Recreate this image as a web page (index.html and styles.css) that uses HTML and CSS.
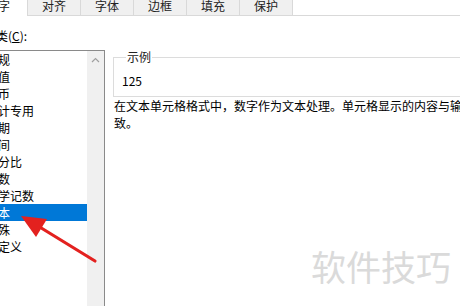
FILE: index.html
```html
<!DOCTYPE html>
<html lang="zh-CN">
<head>
    <meta charset="UTF-8">
    <title>设置单元格格式</title>
    <link rel="stylesheet" href="styles.css">
</head>
<body>
    <div class="dialog">
        <div class="tabs">
            <div class="tab active">数字</div>
            <div class="tab">对齐</div>
            <div class="tab">字体</div>
            <div class="tab">边框</div>
            <div class="tab">填充</div>
            <div class="tab">保护</div>
            <div class="tab-rest"></div>
        </div>

        <div class="label">分类(<u>C</u>):</div>

        <div class="main">
            <div class="listbox">
                <ul class="items">
                    <li>常规</li>
                    <li>数值</li>
                    <li>货币</li>
                    <li>会计专用</li>
                    <li>日期</li>
                    <li>时间</li>
                    <li>百分比</li>
                    <li>分数</li>
                    <li>科学记数</li>
                    <li class="selected">文本</li>
                    <li>特殊</li>
                    <li>自定义</li>
                </ul>
                <div class="scrollbar">
                    <svg class="scroll-up" width="9" height="6" viewBox="0 0 9 6">
                        <path d="M1 5 L4.5 1.5 L8 5" fill="none" stroke="#a0a0a0" stroke-width="1.2"/>
                    </svg>
                </div>
            </div>

            <div class="panel">
                <fieldset class="sample">
                    <legend>示例</legend>
                    <div class="sample-value">125</div>
                </fieldset>
                <p class="desc">在文本单元格格式中，数字作为文本处理。单元格显示的内容与输入的内容完全一致。</p>
            </div>
        </div>
    </div>

    <svg class="arrow" width="460" height="306" viewBox="0 0 460 306">
        <line x1="95" y1="261" x2="38" y2="226" stroke="#e3211f" stroke-width="3.2" stroke-linecap="round"/>
        <polygon points="21,216 47,219 36,237" fill="#e3211f"/>
    </svg>

    <div class="watermark">软件技巧</div>
</body>
</html>
```

FILE: styles.css
```css
html, body
{
    margin: 0;
    width: 460px;
    height: 306px;
    overflow: hidden;
    background: #ffffff;
}
body
{
    position: relative;
    font-family: "Noto Sans CJK SC", "Noto Sans", sans-serif;
    font-size: 12px;
    color: #000000;
}
.dialog
{
    width: 640px;
}

/* tab strip, cut off at the top */
.tabs
{
    display: flex;
    margin-top: -6px;
    margin-left: -25px;
    height: 22px;
}
.tab
{
    box-sizing: border-box;
    width: 53px;
    height: 22px;
    line-height: 22px;
    text-align: center;
    background: #f0f0f0;
    border: 1px solid #d9d9d9;
    border-left: none;
    color: #222;
}
.tab.active
{
    background: #ffffff;
    border-bottom: none;
    padding-right: 6px;
}
.tab-rest
{
    flex: 1;
    border-bottom: 1px solid #d9d9d9;
}

.label
{
    margin: 12px 0 0 -16px;
    line-height: 16px;
}
.label u
{
    text-decoration-thickness: 1px;
}

.main
{
    display: flex;
    margin-top: 6px;
}

/* category list */
.listbox
{
    display: flex;
    margin-left: -20px;
    width: 123px;
    height: 280px;
    border: 1px solid #8a8a8a;
    border-bottom: none;
}
.items
{
    flex: 1;
    list-style: none;
    margin: 0;
    padding: 0;
}
.items li
{
    height: 17px;
    line-height: 17px;
    padding-left: 5px;
    white-space: nowrap;
}
.items li.selected
{
    background: #0078d7;
    color: #ffffff;
}
.scrollbar
{
    width: 17px;
    background: #f0f0f0;
    display: flex;
    justify-content: center;
}
.scroll-up
{
    margin-top: 6px;
}

/* right side */
.panel
{
    margin-left: 8px;
    width: 460px;
}
.sample
{
    margin: 0;
    padding: 9px 8px 7px 8px;
    border: 1px solid #dcdcdc;
    width: 420px;
}
.sample legend
{
    padding: 0 1px;
    margin-left: 4px;
    line-height: 14px;
    color: #222;
}
.sample-value
{
    line-height: 16px;
}
.desc
{
    margin: 0 0 0 1px;
    width: 440px;
    line-height: 17px;
}

.arrow
{
    position: absolute;
    left: 0;
    top: 0;
}
.watermark
{
    position: absolute;
    left: 311px;
    top: 244px;
    font-size: 35px;
    line-height: 44px;
    color: #dadada;
    white-space: nowrap;
}
```
